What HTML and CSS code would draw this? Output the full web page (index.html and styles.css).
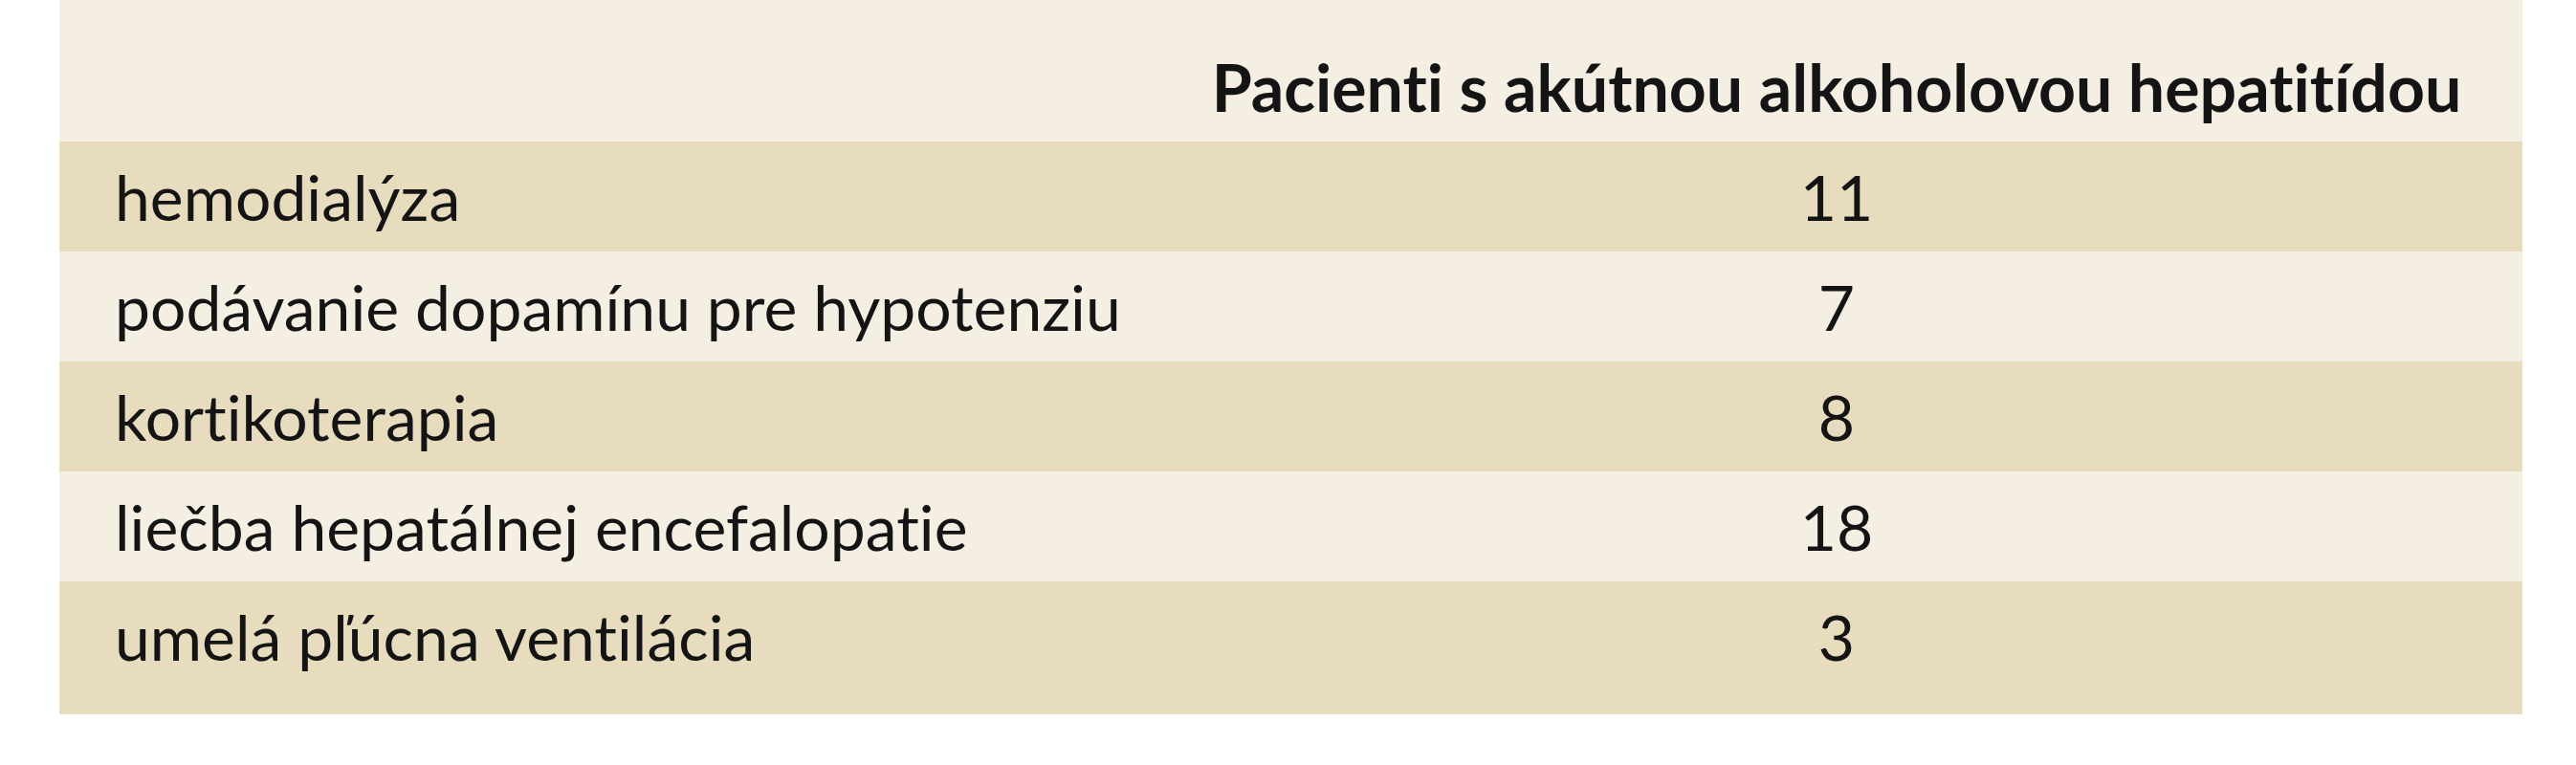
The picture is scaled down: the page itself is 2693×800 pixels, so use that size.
FILE: index.html
```html
<!DOCTYPE html>
<html lang="sk">
<head>
<meta charset="utf-8">
<title>Tabuľka</title>
<link rel="stylesheet" href="styles.css">
</head>
<body>
<table class="data">
  <colgroup>
    <col class="c-label">
    <col class="c-value">
  </colgroup>
  <thead>
    <tr class="head">
      <th class="label"></th>
      <th class="value">Pacienti s akútnou alkoholovou hepatitídou</th>
    </tr>
  </thead>
  <tbody>
    <tr class="dark"><td class="label">hemodialýza</td><td class="value">11</td></tr>
    <tr class="light"><td class="label">podávanie dopamínu pre hypotenziu</td><td class="value">7</td></tr>
    <tr class="dark"><td class="label">kortikoterapia</td><td class="value">8</td></tr>
    <tr class="light"><td class="label">liečba hepatálnej encefalopatie</td><td class="value">18</td></tr>
    <tr class="dark last"><td class="label">umelá pľúcna ventilácia</td><td class="value">3</td></tr>
  </tbody>
</table>
</body>
</html>
```
FILE: styles.css
```css
html, body {
  margin: 0;
  padding: 0;
  background: #ffffff;
}

.data {
  margin-left: 62px;
  width: 2575px;
  border-collapse: collapse;
  table-layout: fixed;
  font-family: Lato, "Open Sans", sans-serif;
  font-size: 66px;
  font-variant-ligatures: none;
  font-feature-settings: "liga" 0, "clig" 0;
  color: #141414;
}

.c-label { width: 1141px; }
.c-value { width: 1434px; }

.data th,
.data td {
  padding: 0;
  height: 115px;
  line-height: 115px;
  vertical-align: top;
  white-space: nowrap;
}

.data .label {
  text-align: left;
  padding-left: 58px;
}

.data .value {
  text-align: center;
}

.head th {
  background: #f4efe2;
  height: 115px;
  padding-top: 33px;
  font-size: 68px;
  font-weight: 700;
}

.dark td { background: #e7dcbd; }
.light td { background: #f4efe2; }

.last td {
  height: 115px;
  padding-bottom: 24px;
}
```
